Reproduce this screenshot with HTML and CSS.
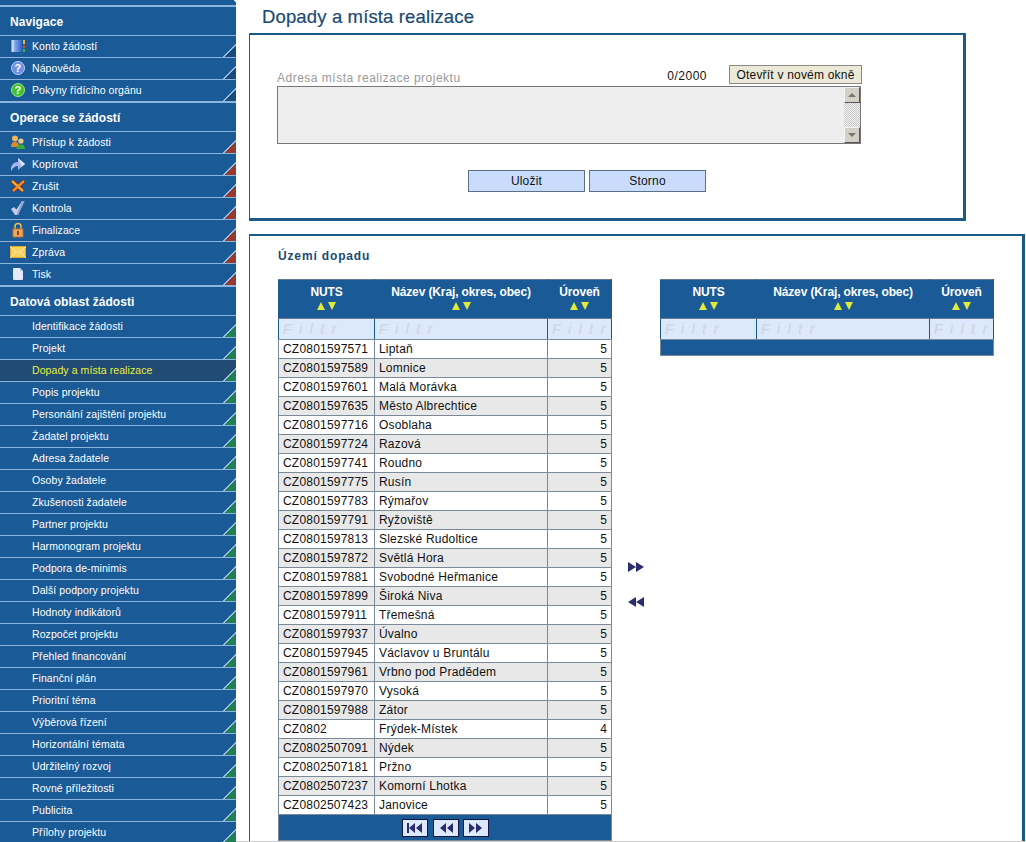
FILE: index.html
```html
<!DOCTYPE html>
<html lang="cs">
<head>
    <meta charset="UTF-8">
    <title>Dopady a místa realizace</title>
    <link rel="stylesheet" href="styles.css">
</head>
<body>
<div class="page">
    <nav class="side">
        <div class="side-top"></div>

        <section class="side-group">
            <h3>Navigace</h3>
            <a class="item tri-blue">
                <svg class="ico" viewBox="0 0 16 16"><defs><linearGradient id="book"><stop offset="0" stop-color="#a8c4f4"/><stop offset="1" stop-color="#2f5fc8"/></linearGradient></defs><rect x="2" y="2" width="10" height="12" fill="url(#book)"/><path d="M1 3h3M1 5h3M1 7h3M1 9h3M1 11h3M1 13h3" stroke="#e4ecf8"/><rect x="13" y="2" width="2" height="4" fill="#e9b53c"/><rect x="13" y="7" width="2" height="3" fill="#d8433a"/><rect x="13" y="11" width="2" height="3" fill="#47b04a"/></svg>
                Konto žádostí
            </a>
            <a class="item tri-blue">
                <svg class="ico" viewBox="0 0 16 16"><circle cx="8" cy="8" r="6.500" fill="#6f8fe6" stroke="#b9c8f2"/><text x="8" y="12" class="ico-q">?</text></svg>
                Nápověda
            </a>
            <a class="item tri-blue">
                <svg class="ico" viewBox="0 0 16 16"><circle cx="8" cy="8" r="6.500" fill="#3fc22e" stroke="#9be58e"/><text x="8" y="12" class="ico-q">?</text></svg>
                Pokyny řídícího orgánu
            </a>
        </section>

        <section class="side-group">
            <h3>Operace se žádostí</h3>
            <a class="item tri-red">
                <svg class="ico" viewBox="0 0 16 16"><circle cx="5" cy="4.500" r="3" fill="#eeb45a"/><path d="M1 13c0-4 1.500-5 4-5s4 1 4 5z" fill="#d98a2e"/><circle cx="11" cy="7" r="2.600" fill="#f1c98a"/><path d="M6.500 15c0-3.500 2-4.500 4.500-4.500s4 1 4 4.500z" fill="#3aa83a"/></svg>
                Přístup k žádosti
            </a>
            <a class="item tri-red">
                <svg class="ico" viewBox="0 0 16 16"><path d="M1 15c-.500-6 3-9 7-9V2l7 6-7 6V10c-3 0-5 1.500-7 5z" fill="#a9b6ee"/><path d="M8 2l7 6-3 2.500z" fill="#dfe5fb"/></svg>
                Kopírovat
            </a>
            <a class="item tri-red">
                <svg class="ico" viewBox="0 0 16 16"><path d="M2 3l11 10" stroke="#7a2414" stroke-width="4"/><path d="M14 3L3 13" stroke="#7a2414" stroke-width="4"/><path d="M2 3l11 10" stroke="#f5a832" stroke-width="2.500"/><path d="M14 3L3 13" stroke="#f08a2c" stroke-width="2.500"/></svg>
                Zrušit
            </a>
            <a class="item tri-red">
                <svg class="ico" viewBox="0 0 16 16"><path d="M1 9l3-2 2.500 2.500L12 1h2.500L8 15H5z" fill="#c3cdea"/><path d="M12 1h2.500L8 15H6.500z" fill="#8f9fd0"/></svg>
                Kontrola
            </a>
            <a class="item tri-red">
                <svg class="ico" viewBox="0 0 16 16"><path d="M5 8V4.500a3 3 0 016 0V8" fill="none" stroke="#e8c050" stroke-width="1.500"/><rect x="3" y="7" width="10" height="8" fill="#f0a860" stroke="#b8702c"/><rect x="7" y="9" width="2" height="4" fill="#8a4a1c"/></svg>
                Finalizace
            </a>
            <a class="item tri-red">
                <svg class="ico" viewBox="0 0 16 16"><rect x="0.500" y="2.500" width="15" height="11" fill="#f7d25e" stroke="#e0a832"/><path d="M0 3l8 6 8-6M0 14l6-6M16 14l-6-6" fill="none" stroke="#fbe9a4"/></svg>
                Zpráva
            </a>
            <a class="item tri-red">
                <svg class="ico" viewBox="0 0 16 16"><path d="M3 3q0-1 1-1h6l3 3v8q0 1-1 1H4q-1 0-1-1z" fill="#e6e9fa"/><path d="M10 2l3 3h-3z" fill="#b6bde6"/></svg>
                Tisk
            </a>
        </section>

        <section class="side-group">
            <h3>Datová oblast žádosti</h3>
            <a class="item tri-green">Identifikace žádosti</a>
            <a class="item tri-green">Projekt</a>
            <a class="item tri-green active">Dopady a místa realizace</a>
            <a class="item tri-green">Popis projektu</a>
            <a class="item tri-green">Personální zajištění projektu</a>
            <a class="item tri-green">Žadatel projektu</a>
            <a class="item tri-green">Adresa žadatele</a>
            <a class="item tri-green">Osoby žadatele</a>
            <a class="item tri-green">Zkušenosti žadatele</a>
            <a class="item tri-green">Partner projektu</a>
            <a class="item tri-green">Harmonogram projektu</a>
            <a class="item tri-green">Podpora de-minimis</a>
            <a class="item tri-green">Další podpory projektu</a>
            <a class="item tri-green">Hodnoty indikátorů</a>
            <a class="item tri-green">Rozpočet projektu</a>
            <a class="item tri-green">Přehled financování</a>
            <a class="item tri-green">Finanční plán</a>
            <a class="item tri-green">Prioritní téma</a>
            <a class="item tri-green">Výběrová řízení</a>
            <a class="item tri-green">Horizontální témata</a>
            <a class="item tri-green">Udržitelný rozvoj</a>
            <a class="item tri-green">Rovné příležitosti</a>
            <a class="item tri-green">Publicita</a>
            <a class="item tri-green item-cut">Přílohy projektu</a>
        </section>
    </nav>

    <main class="main">
        <h1 class="title">Dopady a místa realizace</h1>

        <div class="box box-form">
            <div class="field-head">
                <span class="field-label">Adresa místa realizace projektu</span>
                <span class="counter">0/2000</span>
                <button class="btn-open">Otevřít v novém okně</button>
            </div>
            <div class="area">
                <div class="scroll">
                    <span class="scroll-btn"><i class="up"></i></span>
                    <span class="scroll-track"></span>
                    <span class="scroll-btn"><i class="down"></i></span>
                </div>
            </div>
            <div class="actions">
                <button class="btn">Uložit</button>
                <button class="btn">Storno</button>
            </div>
        </div>

        <div class="box box-list">
            <h2 class="sub">Území dopadu</h2>
            <div class="pick">
                <table class="grid">
                    <thead>
                        <tr>
                            <th class="c-nuts">NUTS<span class="sort"><i class="up"></i><i class="down"></i></span></th>
                            <th class="c-name">Název (Kraj, okres, obec)<span class="sort"><i class="up"></i><i class="down"></i></span></th>
                            <th class="c-level">Úroveň<span class="sort"><i class="up"></i><i class="down"></i></span></th>
                        </tr>
                        <tr class="filter"><td>Filtr</td><td>Filtr</td><td>Filtr</td></tr>
                    </thead>
                    <tbody>
                        <tr><td>CZ0801597571</td><td>Liptaň</td><td class="num">5</td></tr>
                        <tr><td>CZ0801597589</td><td>Lomnice</td><td class="num">5</td></tr>
                        <tr><td>CZ0801597601</td><td>Malá Morávka</td><td class="num">5</td></tr>
                        <tr><td>CZ0801597635</td><td>Město Albrechtice</td><td class="num">5</td></tr>
                        <tr><td>CZ0801597716</td><td>Osoblaha</td><td class="num">5</td></tr>
                        <tr><td>CZ0801597724</td><td>Razová</td><td class="num">5</td></tr>
                        <tr><td>CZ0801597741</td><td>Roudno</td><td class="num">5</td></tr>
                        <tr><td>CZ0801597775</td><td>Rusín</td><td class="num">5</td></tr>
                        <tr><td>CZ0801597783</td><td>Rýmařov</td><td class="num">5</td></tr>
                        <tr><td>CZ0801597791</td><td>Ryžoviště</td><td class="num">5</td></tr>
                        <tr><td>CZ0801597813</td><td>Slezské Rudoltice</td><td class="num">5</td></tr>
                        <tr><td>CZ0801597872</td><td>Světlá Hora</td><td class="num">5</td></tr>
                        <tr><td>CZ0801597881</td><td>Svobodné Heřmanice</td><td class="num">5</td></tr>
                        <tr><td>CZ0801597899</td><td>Široká Niva</td><td class="num">5</td></tr>
                        <tr><td>CZ0801597911</td><td>Třemešná</td><td class="num">5</td></tr>
                        <tr><td>CZ0801597937</td><td>Úvalno</td><td class="num">5</td></tr>
                        <tr><td>CZ0801597945</td><td>Václavov u Bruntálu</td><td class="num">5</td></tr>
                        <tr><td>CZ0801597961</td><td>Vrbno pod Pradědem</td><td class="num">5</td></tr>
                        <tr><td>CZ0801597970</td><td>Vysoká</td><td class="num">5</td></tr>
                        <tr><td>CZ0801597988</td><td>Zátor</td><td class="num">5</td></tr>
                        <tr><td>CZ0802</td><td>Frýdek-Místek</td><td class="num">4</td></tr>
                        <tr><td>CZ0802507091</td><td>Nýdek</td><td class="num">5</td></tr>
                        <tr><td>CZ0802507181</td><td>Pržno</td><td class="num">5</td></tr>
                        <tr><td>CZ0802507237</td><td>Komorní Lhotka</td><td class="num">5</td></tr>
                        <tr><td>CZ0802507423</td><td>Janovice</td><td class="num">5</td></tr>
                    </tbody>
                    <tfoot>
                        <tr><td colspan="3" class="pager">
                            <span class="page-btn"><svg viewBox="0 0 16 10"><path d="M0 0h2v10H0zM8 0v10L2 5zM15 0v10L9 5z" fill="#2c2c6c"/></svg></span>
                            <span class="page-btn"><svg viewBox="0 0 16 10"><path d="M8 0v10L2 5zM15 0v10L9 5z" fill="#2c2c6c"/></svg></span>
                            <span class="page-btn"><svg viewBox="0 0 16 10"><path d="M1 0v10l6-5zM8 0v10l6-5z" fill="#2c2c6c"/></svg></span>
                        </td></tr>
                    </tfoot>
                </table>

                <div class="move">
                    <svg viewBox="0 0 16 10"><path d="M0 0v10l8-5zM8 0v10l8-5z" fill="#2c2c6c"/></svg>
                    <svg viewBox="0 0 16 10"><path d="M8 0v10L0 5zM16 0v10L8 5z" fill="#2c2c6c"/></svg>
                </div>

                <table class="grid">
                    <thead>
                        <tr>
                            <th class="c-nuts">NUTS<span class="sort"><i class="up"></i><i class="down"></i></span></th>
                            <th class="c-name">Název (Kraj, okres, obec)<span class="sort"><i class="up"></i><i class="down"></i></span></th>
                            <th class="c-level">Úroveň<span class="sort"><i class="up"></i><i class="down"></i></span></th>
                        </tr>
                        <tr class="filter"><td>Filtr</td><td>Filtr</td><td>Filtr</td></tr>
                    </thead>
                    <tfoot>
                        <tr><td colspan="3" class="pager-empty"></td></tr>
                    </tfoot>
                </table>
            </div>
        </div>
    </main>
</div>
</body>
</html>
```

FILE: styles.css
```css
html, body {
    margin: 0;
    padding: 0;
    height: 842px;
    overflow: hidden;
    background: #fff;
}
body {
    font-family: "Liberation Sans", Arial, sans-serif;
    font-size: 11px;
    color: #111;
}
.page {
    display: flex;
    align-items: flex-start;
    height: 842px;
}

/* left menu */
.side {
    width: 236px;
    height: 842px;
    flex: none;
    overflow: hidden;
    background: #1a5a96;
    color: #fff;
}
.side-top {
    position: relative;
    height: 5px;
}
.side-top::after {
    content: "";
    position: absolute;
    top: 0;
    right: 0;
    width: 3px;
    height: 3px;
    background: linear-gradient(to top right, transparent 50%, #fff 50%);
}
.side-group {
    border-top: 2px solid #8db4dc;
}
.side-group h3 {
    margin: 0;
    height: 28px;
    line-height: 30px;
    padding-left: 10px;
    font-size: 12px;
    font-weight: bold;
    letter-spacing: 0.05px;
    border-bottom: 1px solid #8db4dc;
}
.item {
    position: relative;
    box-sizing: border-box;
    display: flex;
    align-items: center;
    height: 22px;
    padding: 0 0 2px 32px;
    font-size: 10.500px;
    letter-spacing: 0.08px;
    border-bottom: 1px solid #8db4dc;
}
.item:last-child {
    height: 21px;
    border-bottom: 0;
}
.item.item-cut {
    height: 20px;
    padding-bottom: 0;
}
.item::after {
    content: "";
    position: absolute;
    right: 0;
    bottom: 0;
    width: 13px;
    height: 13px;
}
.tri-blue::after {
    background: linear-gradient(to bottom right, transparent 47%, #9cbde0 47%, #9cbde0 54%, #174a7e 54%);
}
.tri-red::after {
    background: linear-gradient(to bottom right, transparent 47%, #9cbde0 47%, #9cbde0 54%, #97392f 54%);
}
.tri-green::after {
    background: linear-gradient(to bottom right, transparent 47%, #9cbde0 47%, #9cbde0 54%, #1f7f55 54%);
}
.item.active {
    background: #214a75;
    color: #e6f03c;
}
.ico {
    position: absolute;
    left: 10px;
    top: 2px;
    width: 16px;
    height: 16px;
}
.ico-q {
    font-size: 11px;
    font-weight: bold;
    fill: #fff;
    text-anchor: middle;
}

/* right side */
.main {
    position: relative;
    flex: 1;
    min-width: 0;
    height: 842px;
    padding-left: 13px;
}
.main::after {
    content: "";
    position: absolute;
    left: 0;
    right: 0;
    bottom: 0;
    height: 1px;
    background: #ccc;
}
.title {
    margin: 0;
    height: 33px;
    line-height: 33px;
    padding-left: 13px;
    font-size: 18.500px;
    font-weight: normal;
    letter-spacing: 0.14px;
    color: #1b4a75;
    -webkit-text-stroke: 0.2px #1b4a75;
}
.box {
    box-sizing: border-box;
    background: #fff;
    border: solid #1a5a86;
    border-width: 2px 3px 3px 1px;
}
.box-form {
    width: 717px;
    height: 188px;
    padding: 30px 0 0 27px;
}
.box-list {
    width: 776px;
    margin-top: 13px;
    height: 608px;
    border-bottom: 0;
    padding: 13px 0 0 28px;
}

.field-head {
    display: flex;
    align-items: flex-end;
    width: 585px;
    height: 20px;
    margin-bottom: 1px;
}
.field-label {
    flex: 1;
    font-size: 12px;
    letter-spacing: 0.5px;
    color: #999;
}
.counter {
    margin: 0 22px 2px 0;
    font-size: 12px;
    letter-spacing: 0.5px;
}
.btn-open {
    width: 133px;
    height: 19px;
    margin-bottom: 1px;
    padding: 0;
    font: 12px "Liberation Sans", Arial, sans-serif;
    letter-spacing: 0.2px;
    color: #111;
    background: #ece9d8;
    border: 1px solid #8a8a80;
}
.area {
    box-sizing: border-box;
    display: flex;
    justify-content: flex-end;
    width: 584px;
    height: 58px;
    background: #eee;
    border: 1px solid #777;
}
.scroll {
    display: flex;
    flex-direction: column;
    width: 16px;
}
.scroll-btn {
    box-sizing: border-box;
    display: flex;
    align-items: center;
    justify-content: center;
    height: 16px;
    background: #d4d0c8;
    border: 1px solid;
    border-color: #f4f3ee #555 #555 #f4f3ee;
}
.scroll-track {
    flex: 1;
    background: repeating-conic-gradient(#c8c8c8 0 25%, #f2f2f2 0 50%) 0 0 / 2px 2px;
}
.scroll-btn .up {
    border: 4px solid transparent;
    border-top: 0;
    border-bottom: 4px solid #777;
}
.scroll-btn .down {
    border: 4px solid transparent;
    border-bottom: 0;
    border-top: 4px solid #777;
}
.actions {
    display: flex;
    justify-content: center;
    gap: 4px;
    width: 620px;
    margin-top: 26px;
}
.btn {
    width: 117px;
    height: 22px;
    padding: 0;
    font: 12px "Liberation Sans", Arial, sans-serif;
    letter-spacing: 0.2px;
    color: #111;
    background: #c9dcfc;
    border: 1px solid #5b7185;
}

.sub {
    margin: 0 0 15px;
    height: 15px;
    line-height: 15px;
    font-size: 12px;
    letter-spacing: 0.85px;
    color: #1b4a75;
}
.pick {
    display: flex;
    align-items: flex-start;
}
.grid {
    width: 334px;
    table-layout: fixed;
    border-collapse: collapse;
    background: #1a5a96;
    font-size: 12px;
}
.grid th {
    height: 35px;
    padding: 0 0 3px;
    background: #1a5a96;
    color: #fff;
    font-size: 12px;
    letter-spacing: -0.12px;
    border: 1px solid #1a5a96;
    border-top-color: #5f7a92;
    border-bottom-color: #5f7a92;
    vertical-align: middle;
}
.grid td {
    height: 18px;
    padding: 0 4px;
    line-height: 18px;
    background: #fff;
    border: 1px solid #7a8a99;
    letter-spacing: 0.2px;
    white-space: nowrap;
}
.grid tbody tr:nth-child(even) td {
    background: #e8e8e8;
}
.c-nuts { width: 95px; }
.c-level { width: 63px; }
.grid .num {
    text-align: right;
}
.sort {
    display: flex;
    justify-content: center;
    gap: 3px;
    margin-top: 3px;
}
.sort .up {
    border: 4.500px solid transparent;
    border-top: 0;
    border-bottom: 8px solid #e0ea3c;
}
.sort .down {
    border: 4.500px solid transparent;
    border-bottom: 0;
    border-top: 8px solid #e0ea3c;
}
.grid .filter td {
    height: 20px;
    padding-right: 0;
    background: #dce8fb;
    border-left-color: #1a5a86;
    border-right-color: #1a5a86;
    font-size: 14px;
    font-style: italic;
    letter-spacing: 7.500px;
    color: #cfd3da;
}
.grid .pager {
    height: 25px;
    padding: 0;
    text-align: center;
    background: #1a5a96;
    line-height: 0;
}
.grid .pager-empty {
    height: 15px;
    padding: 0;
    background: #1a5a96;
}
.page-btn {
    box-sizing: border-box;
    display: inline-flex;
    align-items: center;
    justify-content: center;
    width: 26px;
    height: 18px;
    margin-left: 1px;
    background: #dce8fb;
    border: 1px solid #14143c;
}
.page-btn svg {
    width: 16px;
    height: 10px;
}
.move {
    display: flex;
    flex-direction: column;
    align-items: center;
    gap: 25px;
    width: 48px;
    margin-top: 283px;
}
.move svg {
    width: 16px;
    height: 10px;
}
```
